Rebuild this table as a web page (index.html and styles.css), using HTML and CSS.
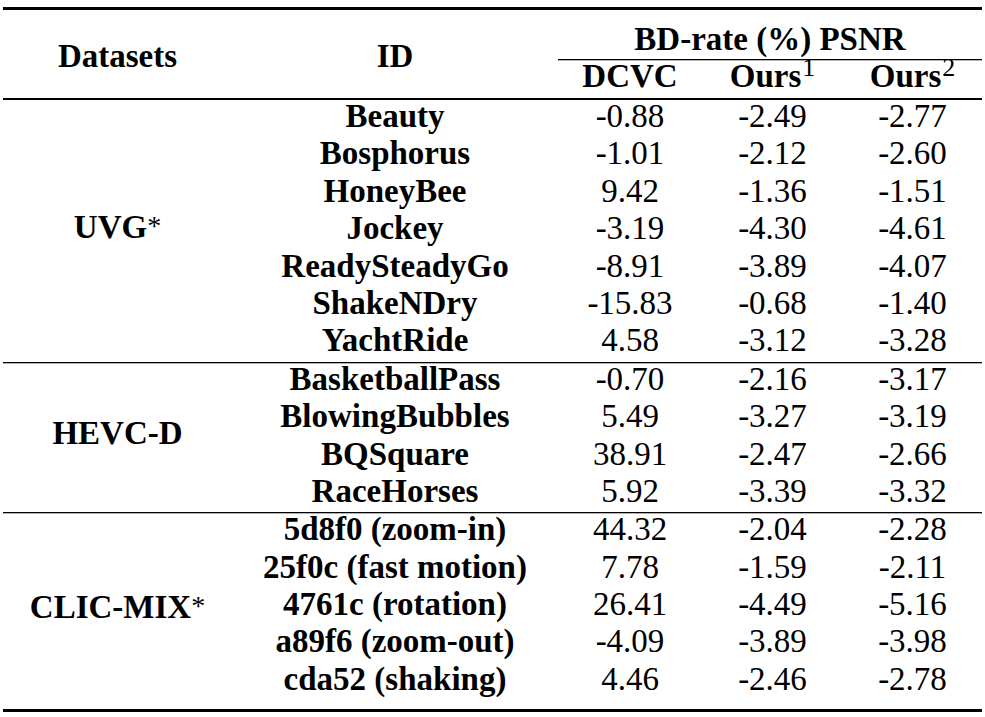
FILE: index.html
```html
<!DOCTYPE html>
<html lang="en">
<head>
<meta charset="utf-8">
<title>BD-rate results</title>
<link rel="stylesheet" href="styles.css">
</head>
<body>
<div class="page">
<table class="results">
  <colgroup>
    <col class="w-ds"><col class="w-id"><col class="w-dcvc"><col class="w-o1"><col class="w-o2">
  </colgroup>
  <thead>
    <tr class="h1">
      <th rowspan="2" class="lbl">Datasets</th>
      <th rowspan="2" class="lbl">ID</th>
      <th colspan="3" class="span">BD-rate (%) PSNR</th>
    </tr>
    <tr class="h2">
      <th class="sub">DCVC</th>
      <th class="sub">Ours<sup>1</sup></th>
      <th class="sub">Ours<sup>2</sup></th>
    </tr>
  </thead>
  <tbody class="grp first">
    <tr><th rowspan="7" class="ds">UVG<sup class="ast">*</sup></th><th class="id">Beauty</th><td>-0.88</td><td>-2.49</td><td>-2.77</td></tr>
    <tr><th class="id">Bosphorus</th><td>-1.01</td><td>-2.12</td><td>-2.60</td></tr>
    <tr><th class="id">HoneyBee</th><td>9.42</td><td>-1.36</td><td>-1.51</td></tr>
    <tr><th class="id">Jockey</th><td>-3.19</td><td>-4.30</td><td>-4.61</td></tr>
    <tr><th class="id">ReadySteadyGo</th><td>-8.91</td><td>-3.89</td><td>-4.07</td></tr>
    <tr><th class="id">ShakeNDry</th><td>-15.83</td><td>-0.68</td><td>-1.40</td></tr>
    <tr><th class="id">YachtRide</th><td>4.58</td><td>-3.12</td><td>-3.28</td></tr>
  </tbody>
  <tbody class="grp">
    <tr><th rowspan="4" class="ds">HEVC-D</th><th class="id">BasketballPass</th><td>-0.70</td><td>-2.16</td><td>-3.17</td></tr>
    <tr><th class="id">BlowingBubbles</th><td>5.49</td><td>-3.27</td><td>-3.19</td></tr>
    <tr><th class="id">BQSquare</th><td>38.91</td><td>-2.47</td><td>-2.66</td></tr>
    <tr><th class="id">RaceHorses</th><td>5.92</td><td>-3.39</td><td>-3.32</td></tr>
  </tbody>
  <tbody class="grp last">
    <tr><th rowspan="5" class="ds">CLIC-MIX<sup class="ast">*</sup></th><th class="id">5d8f0 (zoom-in)</th><td>44.32</td><td>-2.04</td><td>-2.28</td></tr>
    <tr><th class="id">25f0c (fast motion)</th><td>7.78</td><td>-1.59</td><td>-2.11</td></tr>
    <tr><th class="id">4761c (rotation)</th><td>26.41</td><td>-4.49</td><td>-5.16</td></tr>
    <tr><th class="id">a89f6 (zoom-out)</th><td>-4.09</td><td>-3.89</td><td>-3.98</td></tr>
    <tr><th class="id">cda52 (shaking)</th><td>4.46</td><td>-2.46</td><td>-2.78</td></tr>
  </tbody>
</table>
</div>
</body>
</html>
```
FILE: styles.css
```css
html, body {
  margin: 0;
  padding: 0;
  background: #ffffff;
}

.page {
  padding: 7px 3px 0 3px;
}

.results {
  table-layout: fixed;
  width: 979px;
  border-collapse: separate;
  border-spacing: 0;
  font-family: "Liberation Serif", "Times New Roman", serif;
  font-size: 33px;
  color: #000;
  border-top: 3px solid #000;
  border-bottom: 3px solid #000;
}

.w-ds { width: 229px; }
.w-id { width: 326px; }
.w-dcvc { width: 144px; }
.w-o1 { width: 141px; }
.w-o2 { width: 139px; }

.results th,
.results td {
  padding: 0;
  text-align: center;
  vertical-align: middle;
  white-space: nowrap;
}

.results th { font-weight: bold; }
.results td { font-weight: normal; }

/* header */
.h1 .span {
  line-height: 37.5px;
  padding-top: 11px;
  padding-bottom: 0.5px;
}

.h1 .lbl {
  line-height: 37px;
  padding-top: 5px;
  border-bottom: 2px solid #000;
}

.h2 .sub {
  line-height: 33px;
  padding-bottom: 5px;
  border-top: 1px solid #000;
  box-shadow: inset 0 1px 0 rgba(0, 0, 0, 0.3);
  border-bottom: 2px solid #000;
}

/* body */
.grp .id,
.grp td {
  line-height: 33px;
  padding-bottom: 4.4px;
}

.grp .ds {
  line-height: 33px;
  padding-bottom: 7.4px;
}

.grp + .grp tr:first-child > * {
  border-top: 1px solid #000;
  box-shadow: inset 0 1px 0 rgba(0, 0, 0, 0.3);
}

.grp.last tr:last-child > * {
  padding-bottom: 13px;
}

/* superscripts */
.results sup {
  font-weight: normal;
  font-size: 26px;
  line-height: 0;
  vertical-align: 11px;
  margin-left: 1px;
}

.results sup.ast {
  font-size: 28px;
  vertical-align: 3px;
  margin-left: 0;
}
```
